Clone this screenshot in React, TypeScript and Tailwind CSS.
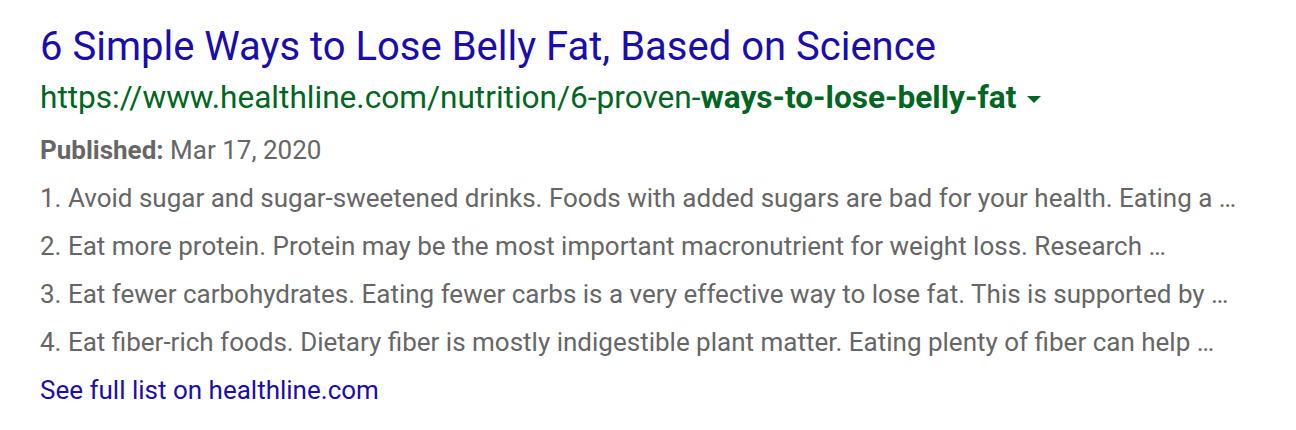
export default function App() {
  const items = [
    "1. Avoid sugar and sugar-sweetened drinks. Foods with added sugars are bad for your health. Eating a …",
    "2. Eat more protein. Protein may be the most important macronutrient for weight loss. Research …",
    "3. Eat fewer carbohydrates. Eating fewer carbs is a very effective way to lose fat. This is supported by …",
    "4. Eat fiber-rich foods. Dietary fiber is mostly indigestible plant matter. Eating plenty of fiber can help …",
  ];

  return (
    <div
      className="w-[1296px] h-[430px] bg-white pl-[40px] pt-[23px]"
      style={{ fontFamily: "Roboto, Arial, sans-serif" }}
    >
      <div className="text-[40px] leading-[48px] text-[#1a0dab]">
        6 Simple Ways to Lose Belly Fat, Based on Science
      </div>
      <div className="mt-[7px] flex items-center text-[31.6px] leading-[40px] text-[#006621]">
        <span>
          https://www.healthline.com/nutrition/6-proven-
          <b className="font-bold">ways-to-lose-belly-fat</b>
        </span>
        <span className="ml-[11px] mt-[3px] h-0 w-0 border-x-[7px] border-t-[7px] border-x-transparent border-t-[#006621]" />
      </div>
      <div className="mt-[8px] text-[26px] leading-[48px] text-[#666666]">
        <div>
          <b className="font-bold">Published:</b> Mar 17, 2020
        </div>
        {items.map((t) => (
          <div key={t}>{t}</div>
        ))}
      </div>
      <div className="text-[26px] leading-[48px] text-[#1a0dab]">See full list on healthline.com</div>
    </div>
  );
}
